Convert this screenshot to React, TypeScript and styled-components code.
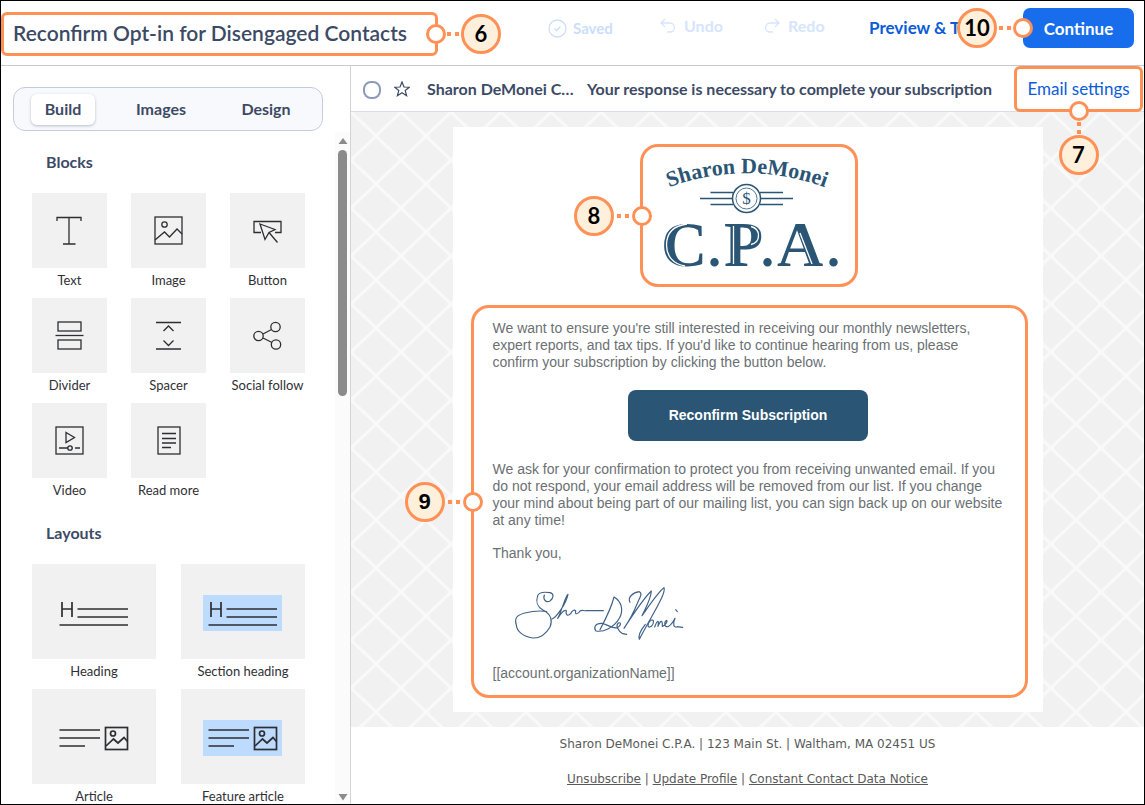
import React from "react";
import styled, { createGlobalStyle, css } from "styled-components";

const orange = "#ff9157";
const ink = "#3d4a66";
const blue = "#0b5cd9";
const navy = "#2b5574";

const GlobalStyle = createGlobalStyle`
  *, *::before, *::after { box-sizing: border-box; }
  body { margin: 0; background: #fff; font-family: Lato, "Liberation Sans", sans-serif; color: ${ink}; }
  h1, h2, p, ul { margin: 0; padding: 0; }
  button { font-family: inherit; margin: 0; padding: 0; border: 0; background: none; color: inherit; cursor: pointer; }
`;

const Shell = styled.div`
  display: flex;
  flex-direction: column;
  height: 100vh;
  min-height: 600px;
  border: 1px solid #000;
  overflow: hidden;
`;

/* Callouts */
type Side = "left" | "right" | "bottom";

const Highlight = styled.div<{ $radius?: number }>`
  position: relative;
  border: 3px solid ${orange};
  border-radius: ${(p) => p.$radius ?? 6}px;
`;

const markerSide = {
  right: css`left: 100%; top: 50%; flex-direction: row; transform: translate(-9px, -50%);`,
  left: css`right: 100%; top: 50%; flex-direction: row-reverse; transform: translate(9px, -50%);`,
  bottom: css`left: 50%; top: 100%; flex-direction: column; transform: translate(-50%, -8px);`,
};

const MarkerBox = styled.div<{ $side: Side }>`
  position: absolute;
  z-index: 2;
  display: flex;
  align-items: center;
  ${(p) => markerSide[p.$side]}
`;

const Ring = styled.span`
  width: 20px;
  height: 20px;
  border: 3px solid ${orange};
  border-radius: 50%;
  background: #fff;
`;

const dotPadding = { right: "0 2px 0 1px", left: "0 3px", bottom: "1px 0" };

const Dots = styled.span<{ $side: Side; $tight?: boolean }>`
  display: flex;
  flex-direction: ${(p) => (p.$side === "bottom" ? "column" : "row")};
  gap: 4px;
  padding: ${(p) => (p.$tight ? "0 2px" : dotPadding[p.$side])};
  &::before, &::after { content: ""; width: 4px; height: 4px; background: ${orange}; }
`;

const Badge = styled.span`
  display: grid;
  place-items: center;
  width: 40px;
  height: 40px;
  border: 3px solid ${orange};
  border-radius: 50%;
  background: #fff0dc;
  color: #000;
  font-size: 22px;
  font-weight: 700;
  line-height: 24px;
`;

function Marker({ side, n }: { side: Side; n: number }) {
  return (
    <MarkerBox $side={side}>
      <Ring />
      <Dots $side={side} />
      <Badge>{n}</Badge>
    </MarkerBox>
  );
}

/* Top bar */
const TopBar = styled.header`
  display: flex;
  flex: none;
  justify-content: space-between;
  align-items: flex-start;
  height: 65px;
  padding: 7px 10px 0 0;
  border-bottom: 1px solid #c9c9cb;
`;

const TitleBox = styled(Highlight)`
  display: flex;
  align-items: center;
  height: 44px;
  width: 437px;
  margin-top: 4px;
  padding: 0 0 2px 9px;
`;

const Title = styled.h1`
  font-size: 21px;
  line-height: 24px;
  font-weight: 600;
  white-space: nowrap;
`;

const Actions = styled.div`
  display: flex;
  align-items: center;
  height: 40px;
`;

const Tool = styled.button<{ $w: number; $strong?: boolean }>`
  display: flex;
  align-items: center;
  gap: 8px;
  width: ${(p) => p.$w}px;
  padding-bottom: ${(p) => (p.$strong ? 0 : 4)}px;
  color: ${(p) => (p.$strong ? blue : "#d6e5fd")};
  font-size: ${(p) => (p.$strong ? 17 : 16)}px;
  line-height: 20px;
  font-weight: 700;
  white-space: nowrap;
`;

const Saved = styled.span`
  display: flex;
  align-items: center;
  gap: 6px;
  width: 112px;
  color: #cadefc;
  font-size: 15px;
  line-height: 20px;
  font-weight: 700;
`;

const ContinueWrap = styled.div`
  position: relative;
`;

const ContinueMarker = styled(MarkerBox)`
  transform: translate(10px, -50%);
`;

const Continue = styled.button`
  width: 111px;
  height: 40px;
  border-radius: 7px;
  background: #186ded;
  color: #fff;
  font-size: 17px;
  font-weight: 700;
`;

/* Main split */
const Main = styled.div`
  display: flex;
  flex: 1;
  min-height: 0;
`;

const Sidebar = styled.aside`
  display: flex;
  flex-direction: column;
  flex: none;
  width: 350px;
  border-right: 1px solid #d3d4d8;
`;

const Tabs = styled.div`
  display: flex;
  align-items: center;
  flex: none;
  width: 310px;
  height: 44px;
  margin: 21px 0 0 12px;
  padding: 0 12px 0 17px;
  border: 1px solid #c3cbe0;
  border-radius: 12px;
  background: #f7f9fd;
`;

const Tab = styled.button<{ $active?: boolean; $w: number }>`
  width: ${(p) => p.$w}px;
  height: 31px;
  padding-bottom: 2px;
  border-radius: 6px;
  font-size: 16px;
  font-weight: 700;
  ${(p) => p.$active && css`background: #fff; box-shadow: 0 1px 3px rgba(40, 50, 80, 0.3);`}
`;

const ScrollRow = styled.div`
  display: flex;
  flex: 1;
  min-height: 0;
  padding-top: 1px;
`;

const Panel = styled.div`
  flex: 1;
  overflow: hidden;
  padding: 20px 0 0 31px;
`;

const Track = styled.div`
  display: flex;
  flex-direction: column;
  align-items: center;
  width: 15px;
  padding: 5px 0 3px;
  background: #fbfbfb;
`;

const Thumb = styled.div`
  width: 9px;
  height: 246px;
  margin: 5px 0 auto;
  border-radius: 5px;
  background: #8b8b8b;
`;

const SectionTitle = styled.h2`
  padding-left: 14px;
  font-size: 16px;
  line-height: 20px;
  font-weight: 700;
`;

const TileGrid = styled.div<{ $col: number; $gap: number }>`
  display: grid;
  grid-template-columns: repeat(auto-fill, ${(p) => p.$col}px);
  column-gap: ${(p) => p.$gap}px;
  margin: 21px 0 15px;
`;

const Tile = styled.button`
  display: flex;
  flex-direction: column;
  color: #2f3035;
  font-size: 13px;
  line-height: 16px;
  text-align: center;
  white-space: nowrap;
`;

const TileArt = styled.span<{ $wide?: boolean }>`
  display: grid;
  place-items: center;
  width: 100%;
  height: ${(p) => (p.$wide ? 95 : 75)}px;
  padding-top: ${(p) => (p.$wide ? 3 : 0)}px;
  background: #f1f1f1;
`;

const TileLabel = styled.span`
  align-self: center;
  padding: 4px 0 10px;
`;

/* Preview */
const Preview = styled.main`
  display: flex;
  flex-direction: column;
  flex: 1;
  min-width: 0;
`;

const InboxBar = styled.div`
  display: flex;
  flex: none;
  align-items: center;
  height: 46px;
  padding: 0 1px 0 12px;
  border-bottom: 1px solid #d9dbe6;
`;

const RoundCheck = styled.input`
  appearance: none;
  width: 18px;
  height: 18px;
  margin: 2px 13px 0 0;
  border: 2px solid #8c9aba;
  border-radius: 8px;
`;

const Sender = styled.span`
  width: 177px;
  padding-left: 17px;
  font-size: 16px;
  line-height: 20px;
  font-weight: 700;
  white-space: nowrap;
`;

const Subject = styled.span`
  flex: 1;
  font-size: 16px;
  line-height: 20px;
  font-weight: 700;
  white-space: nowrap;
`;

const SettingsBox = styled(Highlight)`
  display: grid;
  place-items: center;
  width: 129px;
  height: 46px;
  background: #fff;
`;

const TextLink = styled.a`
  color: ${blue};
  font-size: 17px;
  line-height: 20px;
  text-decoration: none;
`;

const Canvas = styled.div`
  display: flex;
  justify-content: center;
  flex: none;
  padding: 15px 0;
  background-color: #f1f1f1;
  background-image:
    linear-gradient(to top right, transparent calc(50% - 2px), #f9f9f9 calc(50% - 1px), #f9f9f9 calc(50% + 1px), transparent calc(50% + 2px)),
    linear-gradient(to bottom right, transparent calc(50% - 2px), #f9f9f9 calc(50% - 1px), #f9f9f9 calc(50% + 1px), transparent calc(50% + 2px));
  background-size: 50px 48px;
`;

const Email = styled.article`
  display: flex;
  flex-direction: column;
  gap: 18px;
  width: 590px;
  padding: 17px 15px 14px 18px;
  background: #fff;
`;

const LogoBox = styled(Highlight)`
  align-self: center;
  width: 218px;
  height: 143px;
`;

const Copy = styled(Highlight)`
  display: flex;
  flex-direction: column;
  padding: 12px 21px 13px 19px;
  color: #6b7073;
  font-family: "Liberation Sans", Arial, sans-serif;
  font-size: 14px;
  line-height: 17px;
`;

const Confirm = styled.button`
  align-self: center;
  width: 240px;
  height: 51px;
  margin: 19px 0 20px;
  padding-bottom: 2px;
  border-radius: 8px;
  background: ${navy};
  color: #fff;
  font-size: 14px;
  font-weight: 700;
`;

const Thanks = styled.p`
  margin: 16px 0 23px;
`;

const Signature = styled.svg`
  width: 171px;
  height: 57px;
  margin: 0 0 23px 21px;
`;

const Footer = styled.footer`
  display: flex;
  flex-direction: column;
  align-items: center;
  gap: 19px;
  padding-top: 9px;
  color: #5a5a5a;
  font-family: "DejaVu Sans", Verdana, sans-serif;
  font-size: 12px;
  line-height: 16px;
  a { color: inherit; }
`;

const Line = styled.svg`
  fill: none;
  stroke: #2d2e31;
`;

const mountain = (
  <>
    <rect x="1" y="1" width="27" height="27" />
    <circle cx="10.500" cy="8.500" r="2.700" />
    <path d="M1 24 L10.500 16 L15.500 21 L23 13 L28 18" />
  </>
);

const blocks: [string, React.ReactNode][] = [
  ["Text", <path key="t" d="M2 5 V1.500 H26 V5 M14 1.500 V28 M8 28 H20.500" />],
  ["Image", mountain],
  ["Button", <><path d="M8 16.500 H1 V5.500 H28 V16.500 H22" /><path d="M7 8 L22 13.500 L16 16.500 L12 23.500 Z M16 16.500 L24.500 26.500" /></>],
  ["Divider", <><rect x="3" y="1" width="23" height="9" /><rect x="3" y="19" width="23" height="9" /><path d="M0.500 14.500 H28.500" /></>],
  ["Spacer", <path key="s" d="M2 1.500 H27 M2 28 H27 M9.500 10 L14.500 5 L19.500 10 M9.500 19.500 L14.500 24.500 L19.500 19.500" />],
  ["Social follow", <><circle cx="5.500" cy="15" r="4.700" /><circle cx="22.500" cy="6" r="4.700" /><circle cx="23" cy="23.500" r="4.700" /><path d="M10 13 L18.500 8.500 M10 17 L19 21.500" /></>],
  ["Video", <><rect x="1" y="1" width="27" height="27" /><path d="M11 6.500 L19.500 11.500 L11 16.500 Z M4 22 H13 M17.500 22 H18 M20 22 H25" /><circle cx="15" cy="22" r="2.200" /></>],
  ["Read more", <><rect x="4" y="1" width="22" height="27" /><path d="M8 7.500 H22 M8 12.500 H22 M8 17 H22 M8 21.500 H17" /></>],
];

const headingArt = (
  <path d="M8 7 V22 M18 7 V22 M8 14 H18 M23.500 14 H74 M23.500 22 H74 M5.500 30 H74" strokeWidth="1.700" />
);
const articleArt = (
  <g strokeWidth="1.700">
    <path d="M5.500 10 H46 M5.500 18 H46 M5.500 26 H31" />
    <rect x="51.500" y="7.500" width="22" height="22" />
    <circle cx="59" cy="13.500" r="2.500" />
    <path d="M52 26 L59.500 19 L64 23 L70 17.500 L73.500 21.500" />
  </g>
);

const layouts: [string, React.ReactNode, boolean][] = [
  ["Heading", headingArt, false],
  ["Section heading", headingArt, true],
  ["Article", articleArt, false],
  ["Feature article", articleArt, true],
];

function Logo() {
  return (
    <svg width="212" height="137" viewBox="0 0 212 137" role="img" aria-label="Sharon DeMonei C.P.A." fill={navy}>
      <defs>
        <path id="arch" d="M22 42 A222 222 0 0 1 186 42" />
      </defs>
      <g fontFamily='"Liberation Serif", serif' fontWeight="700">
        <text fontSize="22">
          <textPath href="#arch" startOffset="50%" textAnchor="middle">Sharon DeMonei</textPath>
        </text>
        <text fontSize="64" y="119">
          <tspan x="18">C</tspan>
          <tspan x="65" fontSize="52">.</tspan>
          <tspan x="81">P</tspan>
          <tspan x="118" fontSize="52">.</tspan>
          <tspan x="134">A</tspan>
          <tspan x="184" fontSize="52">.</tspan>
        </text>
      </g>
      <g fill="none" stroke="#fff" strokeWidth="1.300">
        <path d="M44 77 C29 79 23.500 87 23.500 98 C23.500 109 30 117 42 119" />
        <path d="M90.500 79 V117" />
        <path d="M108 79.500 C118 82 118 95 108 97.500" />
        <path d="M157 86 L169 117" />
      </g>
      <g fill="none" stroke={navy} strokeWidth="1.500">
        <path d="M67.500 45.500 H90 M57 51.500 H89 M67.500 57.500 H90 M117 45.500 H140 M118 51.500 H150 M117 57.500 H140" />
        <circle cx="103.500" cy="51.500" r="14" />
        <circle cx="103.500" cy="51.500" r="10.500" strokeWidth="0.800" />
      </g>
      <text x="103.500" y="57" fontSize="17" textAnchor="middle" fontFamily='"Liberation Serif", serif'>$</text>
    </svg>
  );
}

export default function App() {
  return (
    <>
      <GlobalStyle />
      <Shell>
        <TopBar>
          <TitleBox>
            <Title>Reconfirm Opt-in for Disengaged Contacts</Title>
            <Marker side="right" n={6} />
          </TitleBox>
          <Actions>
            <Saved>
              <svg width="19" height="19" viewBox="0 0 19 19" fill="none" stroke="currentColor" strokeWidth="1.300">
                <circle cx="9.500" cy="9.500" r="8.500" />
                <path d="M6.500 9.500 L8.500 11.500 L12.500 7.500" />
              </svg>
              Saved
            </Saved>
            <Tool $w={104}>
              <svg width="16" height="16" viewBox="0 0 16 16" fill="none" stroke="currentColor" strokeWidth="1.300">
                <path d="M5 1 L1 5 L5 9 M1 5 H10 A4.500 4.500 0 0 1 10 14 H7" />
              </svg>
              Undo
            </Tool>
            <Tool $w={105}>
              <svg width="16" height="16" viewBox="0 0 16 16" fill="none" stroke="currentColor" strokeWidth="1.300">
                <path d="M11 1 L15 5 L11 9 M15 5 H6 A4.500 4.500 0 0 0 6 14 H9" />
              </svg>
              Redo
            </Tool>
            <Tool $w={154} $strong>Preview &amp; Test</Tool>
            <ContinueWrap>
              <Continue>Continue</Continue>
              <ContinueMarker $side="left">
                <Ring />
                <Dots $side="left" $tight />
                <Badge>10</Badge>
              </ContinueMarker>
            </ContinueWrap>
          </Actions>
        </TopBar>
        <Main>
          <Sidebar>
            <Tabs>
              <Tab $w={64} $active>Build</Tab>
              <Tab $w={132}>Images</Tab>
              <Tab $w={78}>Design</Tab>
            </Tabs>
            <ScrollRow>
              <Panel>
                <SectionTitle>Blocks</SectionTitle>
                <TileGrid $col={75} $gap={24}>
                  {blocks.map(([label, art]) => (
                    <Tile key={label}>
                      <TileArt>
                        <Line width="29" height="29" viewBox="0 0 29 29" strokeWidth="1.300">{art}</Line>
                      </TileArt>
                      <TileLabel>{label}</TileLabel>
                    </Tile>
                  ))}
                </TileGrid>
                <SectionTitle>Layouts</SectionTitle>
                <TileGrid $col={124} $gap={25}>
                  {layouts.map(([label, art, tinted]) => (
                    <Tile key={label}>
                      <TileArt $wide>
                        <Line width="80" height="36" viewBox="0 0 80 36">
                          {tinted && <rect width="79" height="36" fill="#bddaff" stroke="none" />}
                          {art}
                        </Line>
                      </TileArt>
                      <TileLabel>{label}</TileLabel>
                    </Tile>
                  ))}
                </TileGrid>
              </Panel>
              <Track>
                <svg width="10" height="8" viewBox="0 0 10 8" fill="#8b8b8b"><path d="M5 1 L9.500 7 H0.500 Z" /></svg>
                <Thumb />
                <svg width="10" height="8" viewBox="0 0 10 8" fill="#8b8b8b"><path d="M5 7.500 L9.500 1 H0.500 Z" /></svg>
              </Track>
            </ScrollRow>
          </Sidebar>
          <Preview>
            <InboxBar>
              <RoundCheck type="checkbox" aria-label="Select message" />
              <svg width="16" height="16" viewBox="0 0 16 16" fill="none" stroke={ink} strokeWidth="1.200">
                <path d="M8 1 L10 6 L15.300 6.200 L11.200 9.500 L12.600 14.700 L8 11.800 L3.400 14.700 L4.800 9.500 L0.700 6.200 L6 6 Z" />
              </svg>
              <Sender>Sharon DeMonei C…</Sender>
              <Subject>Your response is necessary to complete your subscription</Subject>
              <SettingsBox>
                <TextLink href="#settings">Email settings</TextLink>
                <Marker side="bottom" n={7} />
              </SettingsBox>
            </InboxBar>
            <Canvas>
              <Email>
                <LogoBox $radius={18}>
                  <Logo />
                  <Marker side="left" n={8} />
                </LogoBox>
                <Copy $radius={18}>
                  <p>
                    We want to ensure you're still interested in receiving our monthly newsletters, expert reports, and
                    tax tips. If you'd like to continue hearing from us, please confirm your subscription by clicking
                    the button below.
                  </p>
                  <Confirm>Reconfirm Subscription</Confirm>
                  <p>
                    We ask for your confirmation to protect you from receiving unwanted email. If you do not respond,
                    your email address will be removed from our list. If you change your mind about being part of our
                    mailing list, you can sign back up on our website at any time!
                  </p>
                  <Thanks>Thank you,</Thanks>
                  <Signature viewBox="72 30 513 171" fill="none" stroke="#3f6288" strokeWidth="3.500" strokeLinecap="round" strokeLinejoin="round">
                    <path d="M163 60 C158 74 168 84 180 78 C192 68 192 56 180 53 C160 50 146 54 143 62 C136 84 142 96 160 106 C184 118 188 138 180 156 C165 182 145 190 128 189 C98 184 80 168 79 150 C72 128 82 120 104 114 C130 108 150 106 170 110" />
                    <path d="M186 132 C198 128 228 88 234 58 C226 62 215 110 203 130 C212 116 222 103 229 107 C226 122 234 124 242 116 C246 106 254 103 257 108 C254 120 264 118 270 108 C276 104 280 108 288 107 L340 107" />
                    <path d="M372 66 C364 100 348 130 330 164 M372 66 C394 78 402 105 388 130 C372 158 340 172 318 168 C310 158 315 144 336 145 C352 148 368 162 382 158 C394 152 394 140 385 144 C376 152 384 168 398 176 L410 178" />
                    <path d="M420 82 C412 68 428 52 448 50 C458 54 450 68 444 80 C432 110 416 140 402 160 C425 125 460 70 484 48 C482 75 466 100 456 122 C475 95 505 50 522 38 C530 55 480 130 448 193 C445 185 450 168 466 148" />
                    <path d="M482 136 C470 146 472 162 484 154 C494 142 492 132 482 136 M494 156 C500 138 508 130 504 154 C510 138 518 130 517 154 C524 152 534 140 530 136 C522 140 522 158 534 155 C544 150 550 140 555 130 C548 146 550 160 562 155 L578 157 M557 104 L562 110" />
                  </Signature>
                  <p>[[account.organizationName]]</p>
                  <Marker side="left" n={9} />
                </Copy>
              </Email>
            </Canvas>
            <Footer>
              <p>Sharon DeMonei C.P.A. | 123 Main St. | Waltham, MA 02451 US</p>
              <p>
                <a href="#unsubscribe">Unsubscribe</a> | <a href="#profile">Update Profile</a> |{" "}
                <a href="#notice">Constant Contact Data Notice</a>
              </p>
            </Footer>
          </Preview>
        </Main>
      </Shell>
    </>
  );
}
